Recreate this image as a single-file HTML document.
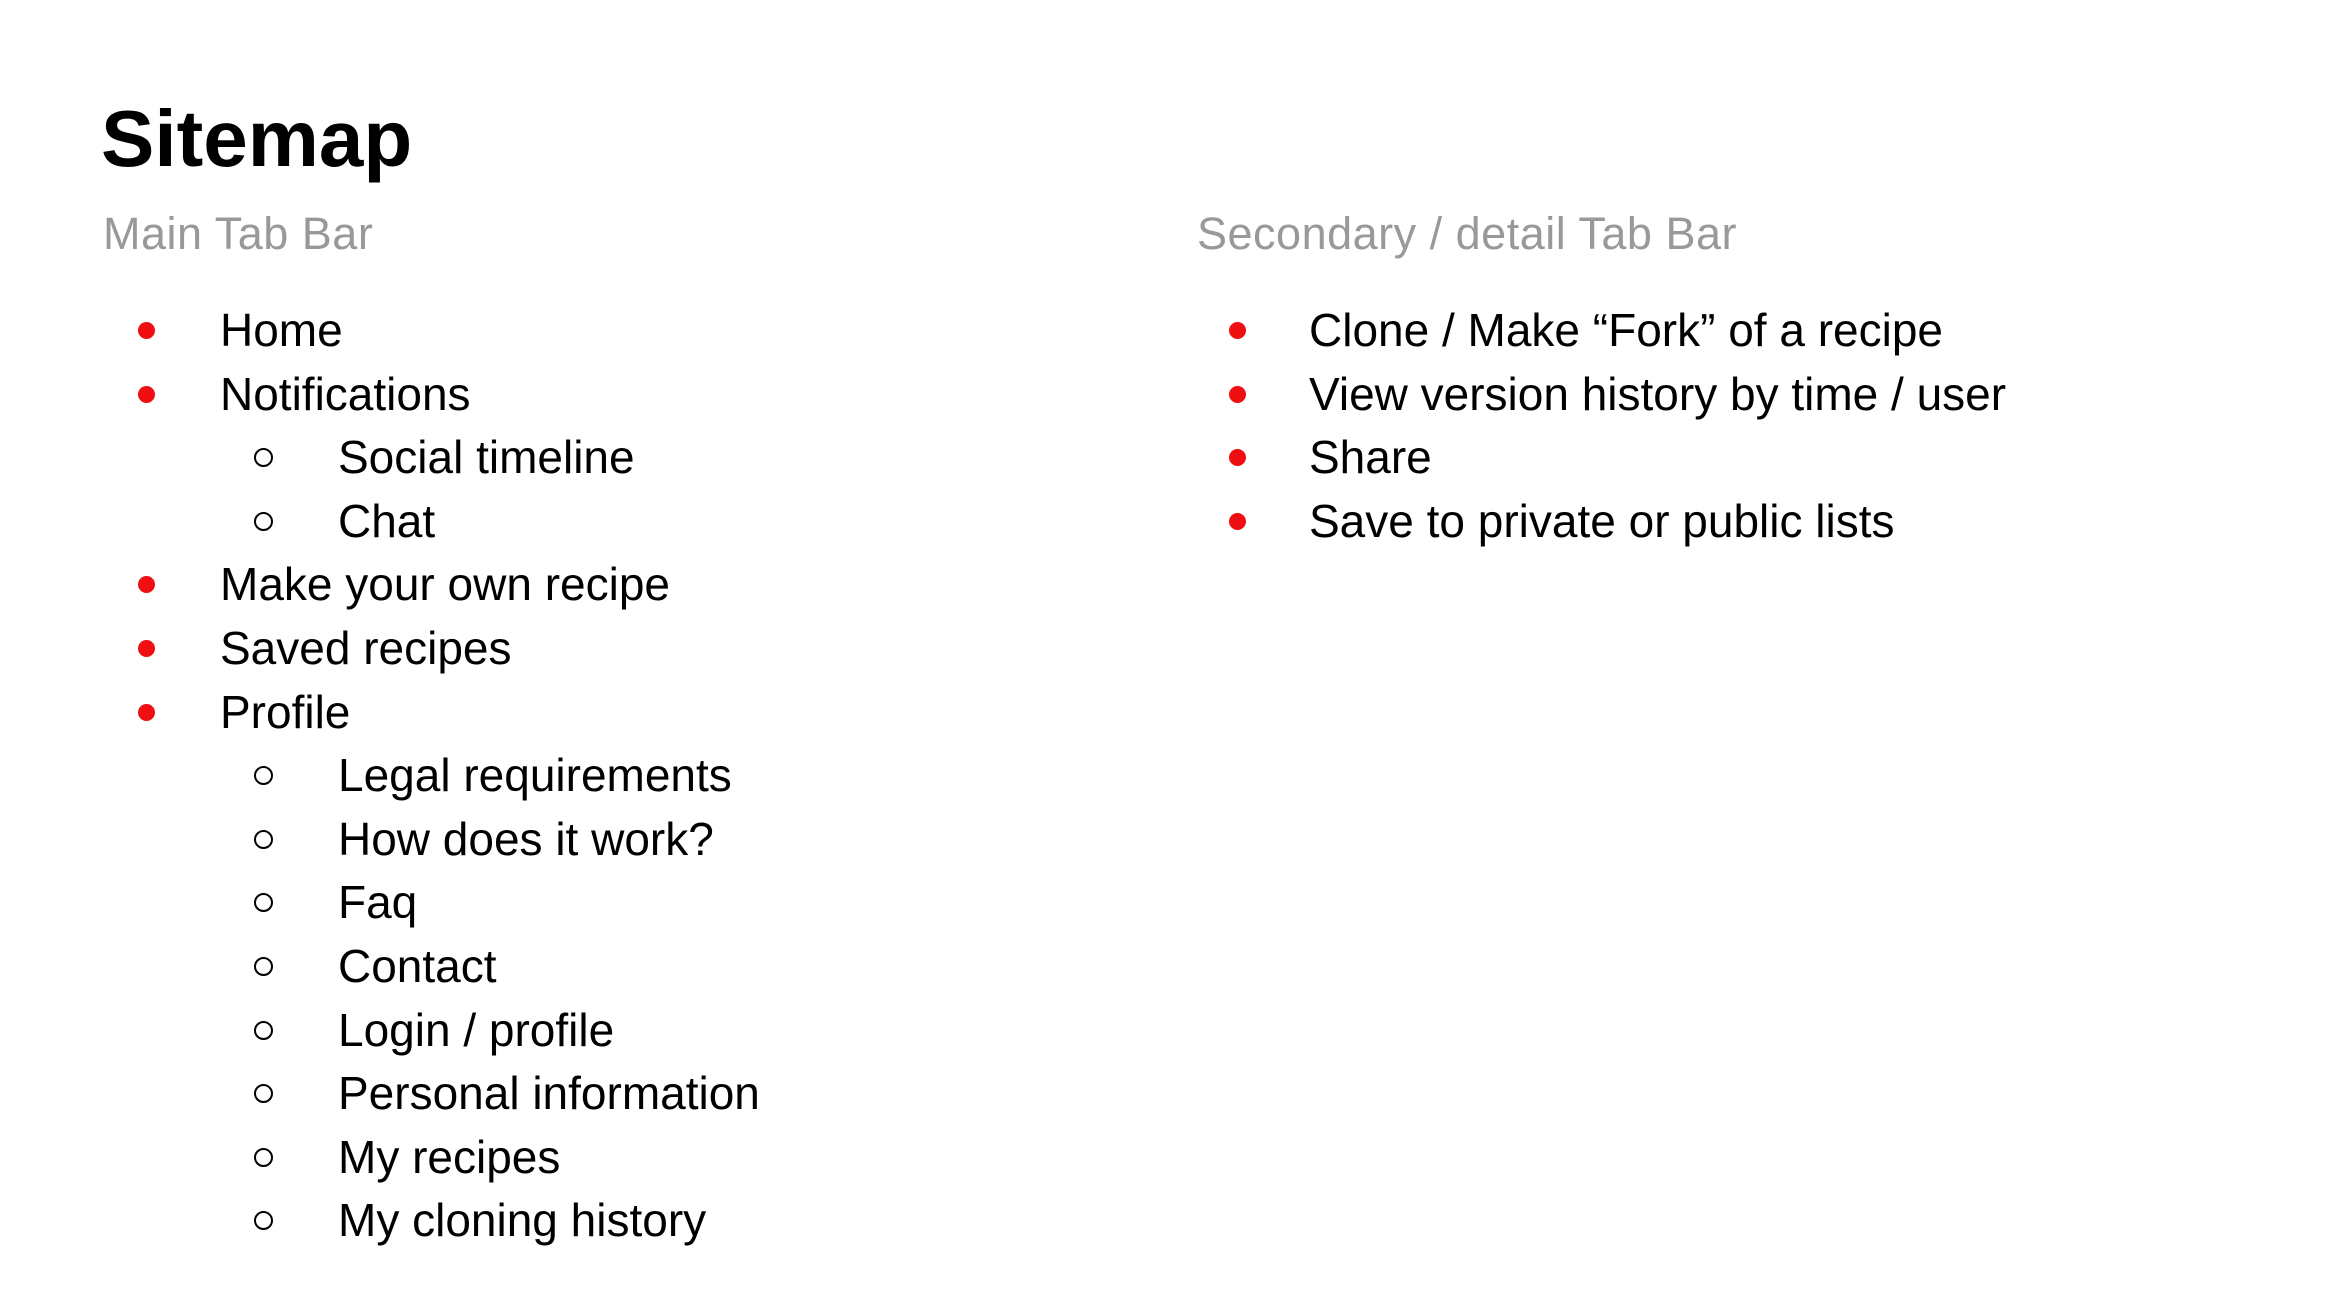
<!DOCTYPE html>
<html><head><meta charset="utf-8"><style>
html,body{margin:0;padding:0;background:#fff;width:2340px;height:1316px;overflow:hidden;font-family:"Liberation Sans",sans-serif;}
.t{position:absolute;left:101px;top:99px;font-size:80px;font-weight:bold;color:#000;line-height:1;}
.h{position:absolute;font-size:45px;color:#999;line-height:1;top:211px;letter-spacing:0.5px}
.list{position:absolute;top:298px;}
.r{height:63.6px;line-height:64px;font-size:46px;color:#000;position:relative;white-space:nowrap}
.r span{position:absolute;}
.d{position:absolute;width:17px;height:17px;border-radius:50%;background:#f00f10;top:24px}
.c{position:absolute;width:15px;height:15px;border-radius:50%;border:2px solid #000;top:23px}
</style></head><body>
<div class="t">Sitemap</div>
<div class="h" style="left:103px">Main Tab Bar</div>
<div class="h" style="left:1197px">Secondary / detail Tab Bar</div>
<div class="list" style="left:0">
<div class="r"><i class="d" style="left:138px"></i><span style="left:220px">Home</span></div>
<div class="r"><i class="d" style="left:138px"></i><span style="left:220px">Notifications</span></div>
<div class="r"><i class="c" style="left:254px"></i><span style="left:338px">Social timeline</span></div>
<div class="r"><i class="c" style="left:254px"></i><span style="left:338px">Chat</span></div>
<div class="r"><i class="d" style="left:138px"></i><span style="left:220px">Make your own recipe</span></div>
<div class="r"><i class="d" style="left:138px"></i><span style="left:220px">Saved recipes</span></div>
<div class="r"><i class="d" style="left:138px"></i><span style="left:220px">Profile</span></div>
<div class="r"><i class="c" style="left:254px"></i><span style="left:338px">Legal requirements</span></div>
<div class="r"><i class="c" style="left:254px"></i><span style="left:338px">How does it work?</span></div>
<div class="r"><i class="c" style="left:254px"></i><span style="left:338px">Faq</span></div>
<div class="r"><i class="c" style="left:254px"></i><span style="left:338px">Contact</span></div>
<div class="r"><i class="c" style="left:254px"></i><span style="left:338px">Login / profile</span></div>
<div class="r"><i class="c" style="left:254px"></i><span style="left:338px">Personal information</span></div>
<div class="r"><i class="c" style="left:254px"></i><span style="left:338px">My recipes</span></div>
<div class="r"><i class="c" style="left:254px"></i><span style="left:338px">My cloning history</span></div>
</div>
<div class="list" style="left:0;width:2340px">
<div class="r"><i class="d" style="left:1229px"></i><span style="left:1309px">Clone / Make “Fork” of a recipe</span></div>
<div class="r"><i class="d" style="left:1229px"></i><span style="left:1309px">View version history by time / user</span></div>
<div class="r"><i class="d" style="left:1229px"></i><span style="left:1309px">Share</span></div>
<div class="r"><i class="d" style="left:1229px"></i><span style="left:1309px">Save to private or public lists</span></div>
</div>
</body></html>
